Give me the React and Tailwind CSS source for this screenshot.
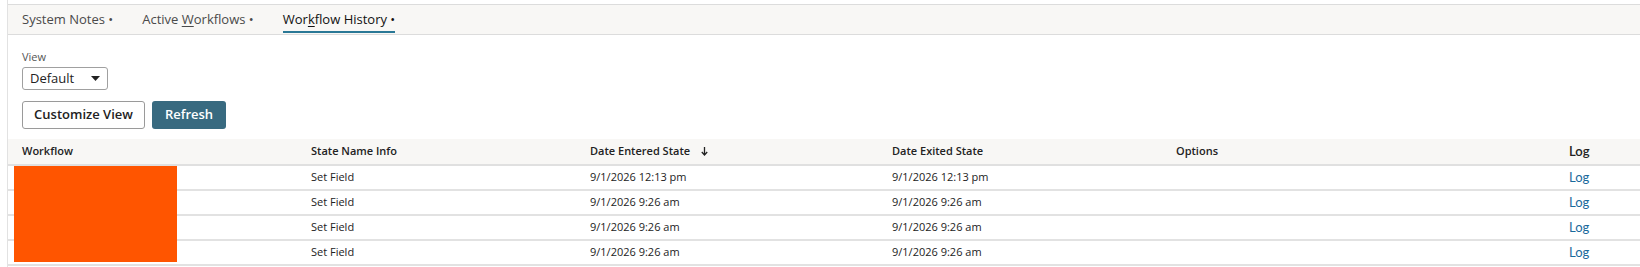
import React from 'react';

const rows = [
  { state: 'Set Field', entered: '9/1/2026 12:13 pm', exited: '9/1/2026 12:13 pm' },
  { state: 'Set Field', entered: '9/1/2026 9:26 am', exited: '9/1/2026 9:26 am' },
  { state: 'Set Field', entered: '9/1/2026 9:26 am', exited: '9/1/2026 9:26 am' },
  { state: 'Set Field', entered: '9/1/2026 9:26 am', exited: '9/1/2026 9:26 am' },
];

const App = () => {
  return (
    <div className="w-[1640px] h-[267px] bg-white overflow-hidden font-['Open_Sans',sans-serif] text-[#222]">
      <div className="ml-[7px] h-full border-l border-[#e2e2e2] pt-[4px]">
        {/* Tabs */}
        <div className="h-[31px] bg-[#f8f7f5] border-t border-b border-[#dcdcdc] flex items-stretch pl-[14px] gap-[29px] text-[13px]">
          <div className="flex items-center text-[#4a4a4a]">System Notes •</div>
          <div className="flex items-center text-[#4a4a4a]">
            <span>Active <span className="underline underline-offset-2">W</span>orkflows •</span>
          </div>
          <div className="relative flex items-center text-[#111]">
            <span>Wor<span className="underline underline-offset-2">k</span>flow History •</span>
            <div className="absolute left-0 right-0 bottom-[1px] h-[2px] bg-[#2a7896]" />
          </div>
        </div>

        {/* Controls */}
        <div className="pl-[14px] pt-[15px]">
          <div className="text-[11px] leading-[14px] text-[#555]">View</div>
          <div className="mt-[3px] w-[86px] h-[23px] border border-[#a0a0a0] rounded-[3px] flex items-center justify-between pl-[7px] pr-[7px] text-[13px] text-[#222]">
            <span>Default</span>
            <svg width="9" height="5" viewBox="0 0 9 5"><path d="M0 0h9L4.5 5z" fill="#222" /></svg>
          </div>
          <div className="mt-[11px] flex gap-[7px]">
            <button className="h-[28px] w-[123px] border border-[#9a9a9a] rounded-[3px] bg-white text-[13px] font-semibold text-[#222]">
              Customize View
            </button>
            <button className="h-[28px] w-[74px] rounded-[3px] bg-[#386a80] text-[13px] font-semibold text-white">
              Refresh
            </button>
          </div>
        </div>

        {/* Table */}
        <div className="relative mt-[10px]">
          <table className="w-full table-fixed border-collapse text-[11px]">
            <colgroup>
              <col className="w-[289px]" />
              <col className="w-[279px]" />
              <col className="w-[302px]" />
              <col className="w-[284px]" />
              <col className="w-[393px]" />
              <col />
            </colgroup>
            <thead>
              <tr className="h-[26px] bg-[#f8f7f5] border-b-2 border-[#e0e0e0] text-left">
                <th className="pl-[14px] font-semibold">Workflow</th>
                <th className="pl-[14px] font-semibold">State Name Info</th>
                <th className="pl-[14px] font-semibold">
                  Date Entered State
                  <svg className="inline-block ml-[11px] -mt-[2px]" width="7" height="9" viewBox="0 0 7 9">
                    <path d="M3.5 0v7.5M0.8 5l2.7 3 2.7-3" stroke="#222" strokeWidth="1.3" fill="none" />
                  </svg>
                </th>
                <th className="pl-[14px] font-semibold">Date Exited State</th>
                <th className="pl-[14px] font-semibold">Options</th>
                <th className="pl-[14px] font-semibold font-['Lato',sans-serif] text-[13px]">Log</th>
              </tr>
            </thead>
            <tbody>
              {rows.map((r, i) => (
                <tr key={i} className="h-[25px] border-b-2 border-[#e2e2e2]">
                  <td className="pl-[14px]"></td>
                  <td className="pl-[14px]">{r.state}</td>
                  <td className="pl-[14px]">{r.entered}</td>
                  <td className="pl-[14px]">{r.exited}</td>
                  <td className="pl-[14px]"></td>
                  <td className="pl-[14px] font-['Lato',sans-serif] text-[13px] text-[#1a6a9c]">Log</td>
                </tr>
              ))}
            </tbody>
          </table>
          {/* redaction block */}
          <div className="absolute left-[6px] top-[27px] w-[163px] h-[96px] bg-[#ff5500]" />
        </div>
      </div>
    </div>
  );
};

export default App;
